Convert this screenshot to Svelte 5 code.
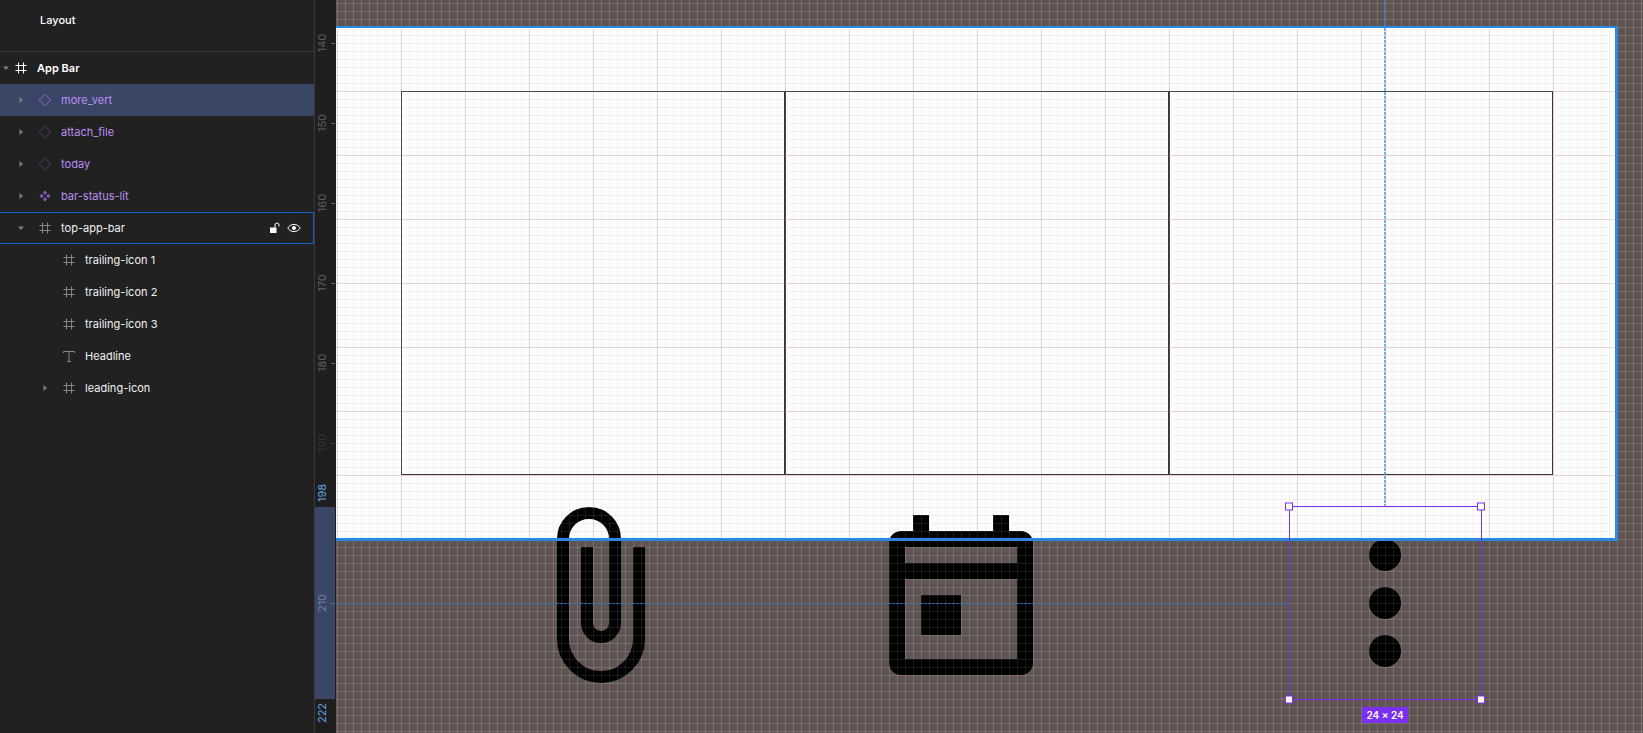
<script>
  // layer tree rows, top to bottom
  const rows = [
    { name: 'App Bar', depth: 0, caret: 'down', icon: 'frame', kind: 'root' },
    { name: 'more_vert', depth: 1, caret: 'right', icon: 'diamond', kind: 'comp', selected: true },
    { name: 'attach_file', depth: 1, caret: 'right', icon: 'diamond', kind: 'comp' },
    { name: 'today', depth: 1, caret: 'right', icon: 'diamond', kind: 'comp' },
    { name: 'bar-status-lit', depth: 1, caret: 'right', icon: 'instance', kind: 'comp' },
    { name: 'top-app-bar', depth: 1, caret: 'down', icon: 'frame', hovered: true },
    { name: 'trailing-icon 1', depth: 2, icon: 'frame' },
    { name: 'trailing-icon 2', depth: 2, icon: 'frame' },
    { name: 'trailing-icon 3', depth: 2, icon: 'frame' },
    { name: 'Headline', depth: 2, icon: 'text' },
    { name: 'leading-icon', depth: 2, caret: 'right', icon: 'frame' },
  ];

  // y of each major tick on the ruler
  const ticks = [
    { label: '140', y: 43 },
    { label: '150', y: 123 },
    { label: '160', y: 203 },
    { label: '170', y: 283 },
    { label: '180', y: 363 },
    { label: '190', y: 443, faded: true },
  ];

  const handles = [
    { x: 1289, y: 506, top: true },
    { x: 1481, y: 506, top: true },
    { x: 1289, y: 699 },
    { x: 1481, y: 699 },
  ];
</script>

{#snippet caretIcon(dir)}
  <svg class="caret" width="10" height="10" viewBox="0 0 10 10">
    {#if dir === 'down'}
      <path d="M2 3.5h6L5 7z" />
    {:else if dir === 'right'}
      <path d="M3.5 2v6L7 5z" />
    {/if}
  </svg>
{/snippet}

{#snippet layerIcon(type, selected, root)}
  <svg class="layer-icon" class:white={root} width="16" height="16" viewBox="0 0 16 16">
    {#if type === 'frame'}
      <path d="M5.5 2.500v11M10.500 2.500v11M2.500 5.500h11M2.500 10.500h11" class="line" />
    {:else if type === 'text'}
      <path d="M2.500 3.500h11M8 3.500v10M6 13.500h4M2.500 3.500v1.500M13.500 3.500v1.500" class="line" />
    {:else if type === 'diamond'}
      <path d="M8 2.200 13.800 8 8 13.800 2.200 8z" class="diamond" class:bright={selected} />
    {:else}
      <path d="M8 2.500 10.200 4.700 8 6.900 5.800 4.700zM8 9.100 10.200 11.300 8 13.500 5.800 11.300zM4.700 5.800 6.900 8 4.700 10.200 2.500 8zM11.300 5.800 13.500 8 11.300 10.200 9.100 8z" class="instance" />
    {/if}
  </svg>
{/snippet}

<div class="app">
  <aside class="panel">
    <div class="panel-head">Layout</div>
    <div class="tree">
      {#each rows as row}
        <div
          class="row depth-{row.depth}"
          class:selected={row.selected}
          class:hovered={row.hovered}
          class:comp={row.kind === 'comp'}
          class:root={row.kind === 'root'}
        >
          {@render caretIcon(row.caret)}
          {@render layerIcon(row.icon, row.selected, row.kind === 'root')}
          <span class="name">{row.name}</span>
          {#if row.hovered}
            <div class="row-actions">
              <svg width="12" height="12" viewBox="0 0 12 12">
                <path d="M1 5.500h6.500V11H1z" fill="#fff" />
                <path d="M6 5.500V3a2 2 0 0 1 4 0v1.500" fill="none" stroke="#fff" stroke-width="1" />
              </svg>
              <svg width="14" height="12" viewBox="0 0 14 12">
                <path d="M.8 6C2.300 3.600 4.500 2.400 7 2.400S11.700 3.600 13.200 6C11.700 8.400 9.500 9.600 7 9.600S2.300 8.400.8 6z" fill="none" stroke="#fff" stroke-width="1" />
                <circle cx="7" cy="6" r="2" fill="#fff" />
              </svg>
            </div>
          {/if}
        </div>
      {/each}
    </div>
  </aside>

  <div class="ruler">
    <div class="ruler-band"></div>
    {#each ticks as t}
      <span class="ruler-label" class:faded={t.faded} style="top: {t.y}px">{t.label}</span>
      <span class="ruler-tick" class:faded={t.faded} style="top: {t.y}px"></span>
    {/each}
    <span class="ruler-label sel" style="top: 493px">198</span>
    <span class="ruler-label mid" style="top: 603px">210</span>
    <span class="ruler-tick" style="top: 603px"></span>
    <span class="ruler-label sel" style="top: 713px">222</span>
  </div>

  <main class="canvas">
    <section class="frame">
      <div class="cells">
        <div class="cell"></div>
        <div class="cell"></div>
        <div class="cell"></div>
      </div>
    </section>

    <!-- icons are drawn in page coordinates -->
    <svg class="icons" viewBox="336 0 1307 733">
      <path
        d="M639 547V639A38 38 0 0 1 563 639V539A26 26 0 0 1 615 539V623A14 14 0 0 1 587 623V547"
        fill="none"
        stroke="#000"
        stroke-width="12"
      />
      <path
        fill-rule="evenodd"
        d="M913 515H929V531H993V515H1009V531H1021A12 12 0 0 1 1033 543V663A12 12 0 0 1 1021 675H901A12 12 0 0 1 889 663V543A12 12 0 0 1 901 531H913ZM905 547V563H1017V547ZM905 579V659H1017V579ZM921 595H961V635H921Z"
      />
      <circle cx="1385" cy="555" r="16" />
      <circle cx="1385" cy="603" r="16" />
      <circle cx="1385" cy="651" r="16" />
    </svg>

    <div class="pixel-grid"></div>
    <div class="frame-outline"></div>

    <svg class="overlay" viewBox="336 0 1307 733">
      <path d="M336 603.500H1288" stroke="#2f70b8" stroke-width="1" stroke-dasharray="3 1" />
      <path d="M1385 0V506" stroke="#2a87f0" stroke-opacity="0.65" stroke-width="2" stroke-dasharray="3 1" />
      <rect x="1289.500" y="506.500" width="192" height="193" fill="none" stroke="#7b2ff2" />
      {#each handles as h}
        <rect
          x={h.x - 3.5}
          y={h.y - 3}
          width="7"
          height="7"
          fill="#fff"
          stroke="#7b2ff2"
        />
      {/each}
    </svg>

    <div class="size-tag">24 × 24</div>
  </main>
</div>

<style>
  :global(body) {
    margin: 0;
    background: #5f5451;
  }

  .app {
    display: flex;
    width: 1643px;
    height: 733px;
    overflow: hidden;
    font-family: Inter, "Liberation Sans", sans-serif;
    font-size: 11px;
    color: #fff;
  }

  .panel {
    flex: 0 0 314px;
    background: #212121;
    border-right: 1px solid #3a3a3a;
  }

  .panel-head {
    height: 52px;
    box-sizing: border-box;
    padding: 14px 0 0 40px;
    line-height: 13px;
    font-weight: 500;
    border-bottom: 1px solid #3a3a3a;
  }

  .row {
    display: flex;
    align-items: center;
    height: 32px;
    box-sizing: border-box;
    color: #f2f2f2;
    letter-spacing: 0.02px;
  }

  .depth-0 {
    padding-left: 1px;
  }

  .depth-1 {
    padding-left: 16px;
  }

  .depth-2 {
    padding-left: 40px;
  }

  .row.root {
    font-weight: 600;
    color: #fff;
  }

  .row.comp {
    color: #bd8ff2;
  }

  .row.selected {
    background: #3a4666;
  }

  .row.hovered {
    border: 1px solid #0f5fc4;
    border-left: 0;
  }

  .caret {
    flex: none;
    fill: #7e7e7e;
  }

  .layer-icon {
    flex: none;
    margin-left: 11px;
    margin-right: 8px;
  }

  .root .layer-icon {
    margin-left: 2px;
  }

  .line {
    fill: none;
    stroke: #858585;
    stroke-width: 1;
  }

  .white .line {
    stroke: #fff;
  }

  .diamond {
    fill: none;
    stroke: #4c3c68;
    stroke-width: 1;
  }

  .diamond.bright {
    stroke: #8c62cf;
  }

  .instance {
    fill: #7a5bb2;
  }

  .row-actions {
    display: flex;
    align-items: center;
    gap: 6px;
    margin-left: auto;
    margin-right: 12px;
  }

  .ruler {
    position: relative;
    flex: 0 0 21px;
    background: #1e1e1e;
    z-index: 2;
  }

  .ruler-band {
    position: absolute;
    left: 0;
    right: 1px;
    top: 507px;
    height: 192px;
    background: #3a4666;
  }

  .ruler-label {
    position: absolute;
    left: 1px;
    font-size: 11px;
    line-height: 12px;
    color: #5f5f5f;
    writing-mode: vertical-rl;
    transform: translateY(-50%) rotate(180deg);
  }

  .ruler-label.faded {
    color: #333;
  }

  .ruler-label.sel {
    color: #5ba3e0;
  }

  .ruler-label.mid {
    color: #6f7f9f;
  }

  .ruler-tick {
    position: absolute;
    right: 1px;
    width: 4px;
    height: 1px;
    background: #6a6a6a;
  }

  .ruler-tick.faded {
    background: #3a3a3a;
  }

  .canvas {
    position: relative;
    flex: 1;
    overflow: hidden;
    background-color: #5f5451;
    background-image:
      linear-gradient(to right, #6a605d 1px, transparent 1px),
      linear-gradient(to bottom, #6a605d 1px, transparent 1px);
    background-size: 8px 8px;
    background-position: 1px 3px;
  }

  .frame {
    position: absolute;
    left: -1px;
    top: 26px;
    width: 1283px;
    height: 514px;
    box-sizing: border-box;
    padding: 65px 0 0 66px;
    background-color: #fff;
    background-image:
      linear-gradient(to right, #e8cccc 1px, transparent 1px),
      linear-gradient(to bottom, #e8cccc 1px, transparent 1px),
      linear-gradient(to right, #eeeeee 1px, transparent 1px),
      linear-gradient(to bottom, #eeeeee 1px, transparent 1px);
    background-size: 64px 64px, 64px 64px, 8px 8px, 8px 8px;
    background-position: 2px 1px, 2px 1px, 2px 1px, 2px 1px;
  }

  .cells {
    display: flex;
  }

  .cell {
    width: 384px;
    height: 384px;
    box-sizing: border-box;
    border: 1px solid #3f3232;
  }

  .icons,
  .overlay {
    position: absolute;
    left: 0;
    top: 0;
    width: 1307px;
    height: 733px;
  }

  .pixel-grid {
    position: absolute;
    inset: 0;
    background-image:
      linear-gradient(to right, rgba(255, 255, 255, 0.09) 1px, transparent 1px),
      linear-gradient(to bottom, rgba(255, 255, 255, 0.09) 1px, transparent 1px);
    background-size: 8px 8px;
    background-position: 1px 3px;
  }

  .frame-outline {
    position: absolute;
    left: -2px;
    top: 26px;
    width: 1284px;
    height: 515px;
    box-sizing: border-box;
    border: 2px solid #2a87e4;
    border-right-width: 3px;
    border-bottom-width: 3px;
  }

  .size-tag {
    position: absolute;
    left: 1026px;
    top: 707px;
    width: 46px;
    height: 16px;
    line-height: 16px;
    text-align: center;
    background: #7b2ff2;
    border-radius: 1px;
    font-size: 10px;
    font-weight: 600;
    color: #fff;
    white-space: nowrap;
  }
</style>
